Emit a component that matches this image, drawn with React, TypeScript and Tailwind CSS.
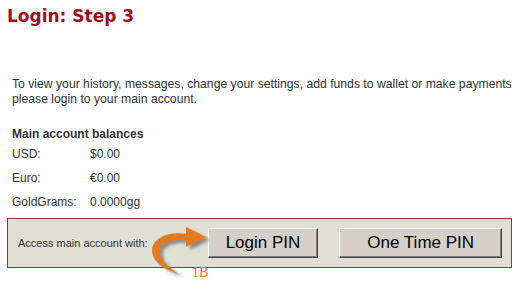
const Bevel = ({ label, className }: { label: string; className: string }) => (
  <button
    className={`h-[30px] border border-t-white border-l-white border-r-[#404040] border-b-[#404040] bg-[#d4d0c8] text-[17px] text-black shadow-[inset_-1px_-1px_0_#808080] ${className}`}
  >
    {label}
  </button>
);

// curved orange pointer drawn over the box
const arrowBody = 'M40 12 C 24 9, 5 14, 4 28 C 4 40, 17 48, 31 52 C 20 45, 11 38, 11 29 C 11 20, 25 17, 40 18 Z';

function Arrow() {
  return (
    <div className="pointer-events-none absolute left-[148px] top-[222px] h-[60px] w-[70px]">
      <svg width="70" height="60" viewBox="0 0 70 60" className="absolute left-0 top-0">
        <defs>
          <filter id="sh" x="-30%" y="-30%" width="160%" height="160%">
            <feGaussianBlur stdDeviation="1.6" />
          </filter>
        </defs>
        <g transform="translate(4 3)" opacity="0.6" filter="url(#sh)">
          <path d={arrowBody} fill="#555" />
          <polygon points="38,5 58,15 38,25" fill="#555" />
        </g>
        <path d={arrowBody} fill="#e8781c" />
        <polygon points="38,5 58,15 38,25" fill="#e8781c" />
      </svg>
      <span className="absolute left-[44px] top-[44px] font-['Liberation_Serif',serif] text-[14px] leading-none text-[#e8781c]">
        1B
      </span>
    </div>
  );
}

export default function App() {
  return (
    <div className="relative h-[286px] w-[523px] overflow-hidden bg-white font-['Liberation_Sans',Arial,sans-serif]">
      <h1 className="pl-[7px] pt-[5px] font-['DejaVu_Sans',sans-serif] text-[17px] font-bold leading-[22px] text-[#a0101c]">
        Login: Step 3
      </h1>

      <p className="mt-[50px] pl-[12px] text-[12.2px] leading-[15px] text-[#333]">
        To view your history, messages, change your settings, add funds to wallet or make payments
        please login to your main account.
      </p>

      <div className="mt-[19px] pl-[12px] text-[#333]">
        <div className="text-[12px] font-bold leading-[16px]">Main account balances</div>
        <div className="flex flex-col text-[12px]">
          <div className="flex h-[24px] items-center">
            <span className="w-[78px]">USD:</span>
            <span>$0.00</span>
          </div>
          <div className="flex h-[24px] items-center">
            <span className="w-[78px]">Euro:</span>
            <span>€0.00</span>
          </div>
          <div className="flex h-[24px] items-center">
            <span className="w-[78px]">GoldGrams:</span>
            <span>0.0000gg</span>
          </div>
        </div>
      </div>

      <div className="mx-[7px] mt-[4px] flex h-[50px] w-[505px] items-center border border-[#8b3a35] bg-[#e0dfd4] pl-[10px] pr-[9px]">
        <span className="w-[190px] text-[11px] text-[#333]">Access main account with:</span>
        <Bevel label="Login PIN" className="w-[111px]" />
        <Bevel label="One Time PIN" className="ml-[21px] w-[163px]" />
      </div>

      <Arrow />
    </div>
  );
}
